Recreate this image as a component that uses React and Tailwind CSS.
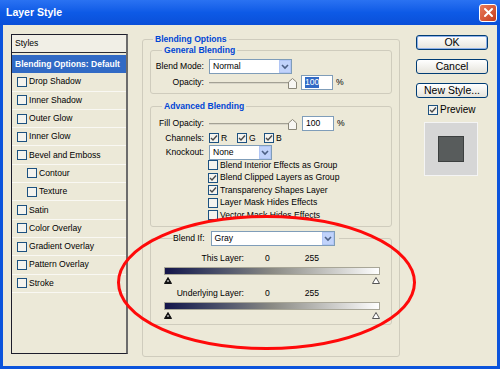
import React from 'react'

const styleRows = [
  { label: 'Drop Shadow' },
  { label: 'Inner Shadow' },
  { label: 'Outer Glow' },
  { label: 'Inner Glow' },
  { label: 'Bevel and Emboss' },
  { label: 'Contour', indent: true },
  { label: 'Texture', indent: true },
  { label: 'Satin' },
  { label: 'Color Overlay' },
  { label: 'Gradient Overlay' },
  { label: 'Pattern Overlay' },
  { label: 'Stroke' },
]

function Check({ checked }) {
  return (
    <span className="w-[10px] h-[10px] shrink-0 border border-[#1c5180] bg-[#f4f3ee] flex items-center justify-center">
      {checked && (
        <svg width="8" height="8" viewBox="0 0 8 8">
          <path d="M1 4 L3 6 L7 1.5" fill="none" stroke="#4a4a4a" strokeWidth="1.4" />
        </svg>
      )}
    </span>
  )
}

function Select({ value, width }) {
  return (
    <div className={`h-[15px] ${width} bg-white border border-[#7f9db9] flex items-center`}>
      <span className="flex-1 pl-[3px]">{value}</span>
      <span className="w-[12px] h-[13px] bg-[#c1d3fb] border border-[#b1c6f5] flex items-center justify-center">
        <svg width="8" height="6" viewBox="0 0 8 6">
          <path d="M1 1 L4 4 L7 1" fill="none" stroke="#4d6185" strokeWidth="1.6" />
        </svg>
      </span>
    </div>
  )
}

function Slider() {
  return (
    <div className="relative w-[86px] h-[12px] flex items-center">
      <div className="w-full h-[2px] border-t border-[#a3a194] bg-[#d8d5c8]" />
      <svg className="absolute right-[-2px] top-[1px]" width="9" height="11" viewBox="0 0 9 11">
        <path d="M0.5 10.5 L0.5 4 L4.5 0.5 L8.5 4 L8.5 10.5 Z" fill="#f7f6f2" stroke="#8a8778" />
      </svg>
    </div>
  )
}

function NumBox({ selected }) {
  return (
    <div className="w-[32px] h-[15px] bg-white border border-[#7f9db9] flex items-center pl-[3px]">
      <span className={selected ? 'bg-[#316ac5] text-white' : ''}>100</span>
    </div>
  )
}

function Legend({ children, className = 'ml-[7px]' }) {
  return (
    <legend className={`${className} px-[2px] font-bold text-[#0046d5] leading-[11px]`}>
      {children}
    </legend>
  )
}

function Row({ label, children, className = '' }) {
  return (
    <div className={`flex items-center ${className}`}>
      <span className="w-[49px] text-right whitespace-nowrap">{label}</span>
      <div className="ml-[5px] flex items-center">{children}</div>
    </div>
  )
}

function GradientBar() {
  return (
    <div>
      <div className="h-[8px] border border-[#a8a697] bg-gradient-to-r from-[#15154a] via-[#8a8a84] to-white" />
      <div className="flex justify-between mt-[2px]">
        <svg width="8" height="7" viewBox="0 0 8 7">
          <path d="M4 0.5 L7.5 6.5 L0.5 6.5 Z" fill="#111" stroke="#111" />
          <rect x="3.5" y="3" width="1" height="2" fill="#fff" />
        </svg>
        <svg width="8" height="7" viewBox="0 0 8 7">
          <path d="M4 0.5 L7.5 6.5 L0.5 6.5 Z" fill="#fff" stroke="#555" />
        </svg>
      </div>
    </div>
  )
}

function XpButton({ children, isDefault }) {
  return (
    <button
      className={`w-[72px] h-[15px] rounded-[3px] border border-[#003c74] bg-gradient-to-b from-white to-[#e6e4dc] text-[10.5px] leading-none ${
        isDefault ? 'shadow-[inset_0_0_0_1px_#8fb1ea]' : ''
      }`}
    >
      {children}
    </button>
  )
}

export default function App() {
  return (
    <div className="relative w-[500px] h-[369px] overflow-hidden bg-[#0b54dc] font-['Liberation_Sans',Arial,sans-serif] text-[8.6px] text-black leading-[11px]">
      {/* title bar */}
      <div className="h-[25px] flex items-center justify-between pl-[6px] pr-[3px] bg-gradient-to-b from-[#2a72f2] via-[#0d5ae6] to-[#0a4fd8]">
        <span className="text-white font-bold text-[10.5px] leading-none -mt-[1px]">Layer Style</span>
        <span className="w-[18px] h-[18px] rounded-[3px] border border-white bg-gradient-to-br from-[#e97b5a] to-[#c5391a] flex items-center justify-center">
          <svg width="11" height="11" viewBox="0 0 11 11">
            <path d="M2 2 L9 9 M9 2 L2 9" stroke="#fff" strokeWidth="2" strokeLinecap="round" />
          </svg>
        </span>
      </div>

      {/* body */}
      <div className="mx-[3px] h-[341px] bg-[#ece9d8] flex pt-[9px] pl-[8px]">
        {/* styles list */}
        <div className="w-[117px] h-[320px] border border-[#1d1d2b] border-r-[#6c6c6c] border-r-2 bg-[#ece9d8]">
          <div className="h-[18px] flex items-center pl-[3px] border-b border-[#2b2b33] bg-[#f1efe6]">Styles</div>
          <div className="pt-[2px]">
            <div className="h-[18.3px] flex items-center pl-[3px] bg-[#316ac5] text-white font-bold text-[8.5px]">
              Blending Options: Default
            </div>
            {styleRows.map((r) => (
              <div
                key={r.label}
                className={`h-[18.3px] flex items-center gap-[2px] border-b border-[#f9f8f3] ${r.indent ? 'pl-[15px]' : 'pl-[5px]'}`}
              >
                <Check />
                <span>{r.label}</span>
              </div>
            ))}
          </div>
        </div>

        {/* blending options */}
        <fieldset className="ml-[14px] w-[258px] h-[323px] border border-[#cfccbd] rounded-[3px] px-[7px]">
          <Legend className="ml-[3px]">Blending Options</Legend>

          <fieldset className="border border-[#cfccbd] rounded-[3px] h-[49px] pl-[4px]">
            <Legend>General Blending</Legend>
            <Row label="Blend Mode:" className="mt-[3px]">
              <Select value="Normal" width="w-[83px]" />
            </Row>
            <Row label="Opacity:" className="mt-[1px]">
              <Slider />
              <span className="ml-[6px]"><NumBox selected /></span>
              <span className="ml-[3px]">%</span>
            </Row>
          </fieldset>

          <fieldset className="mt-[7px] border border-[#cfccbd] rounded-[3px] h-[126px] pl-[4px]">
            <Legend>Advanced Blending</Legend>
            <Row label="Fill Opacity:" className="mt-[4px]">
              <Slider />
              <span className="ml-[7px]"><NumBox /></span>
              <span className="ml-[3px]">%</span>
            </Row>
            <Row label="Channels:" className="mt-[1px] h-[12px]">
              <Check checked />
              <span className="ml-[2px] w-[16px]">R</span>
              <Check checked />
              <span className="ml-[2px] w-[15px]">G</span>
              <Check checked />
              <span className="ml-[2px]">B</span>
            </Row>
            <Row label="Knockout:" className="mt-[1px]">
              <Select value="None" width="w-[63px]" />
            </Row>
            <div className="ml-[53px] -mt-[1px] flex flex-col">
              {[
                ['Blend Interior Effects as Group', false],
                ['Blend Clipped Layers as Group', true],
                ['Transparency Shapes Layer', true],
                ['Layer Mask Hides Effects', false],
                ['Vector Mask Hides Effects', false],
              ].map(([t, c]) => (
                <div key={t} className="h-[12.5px] flex items-center gap-[2px]">
                  <Check checked={c} />
                  <span>{t}</span>
                </div>
              ))}
            </div>
          </fieldset>

          <fieldset className="mt-[4px] border border-[#cfccbd] rounded-[3px] h-[94px] pl-[13px] pr-[11px]">
            <legend className="ml-[9px] pr-[4px] flex items-center">
              <span>Blend If:</span>
              <span className="ml-[6px]">
                <Select value="Gray" width="w-[124px]" />
              </span>
            </legend>
            <div className="mt-[7px] flex items-center">
              <span className="w-[80px] text-right">This Layer:</span>
              <span className="ml-[21px]">0</span>
              <span className="ml-[35px]">255</span>
            </div>
            <div className="mt-[3px]"><GradientBar /></div>
            <div className="mt-[4px] flex items-center">
              <span className="w-[80px] text-right">Underlying Layer:</span>
              <span className="ml-[21px]">0</span>
              <span className="ml-[35px]">255</span>
            </div>
            <div className="mt-[3px]"><GradientBar /></div>
          </fieldset>
        </fieldset>

        {/* buttons */}
        <div className="ml-[16px] w-[72px] pt-[1px] flex flex-col">
          <XpButton isDefault>OK</XpButton>
          <div className="mt-[9px]"><XpButton>Cancel</XpButton></div>
          <div className="mt-[9px]"><XpButton>New Style...</XpButton></div>
          <div className="mt-[6px] ml-[12px] flex items-center gap-[2px]">
            <Check checked />
            <span className="text-[10px]">Preview</span>
          </div>
          <div className="mt-[7px] ml-[8px] w-[54px] h-[54px] bg-[#d6d6d6] border border-[#f4f4f4] flex items-center justify-center">
            <div className="w-[26px] h-[26px] bg-[#585c5c] border border-[#3c3f3f]" />
          </div>
        </div>
      </div>

      {/* red annotation ellipse */}
      <svg className="absolute left-0 top-0 pointer-events-none" width="500" height="369">
        <ellipse cx="266.5" cy="282.5" rx="148" ry="66" fill="none" stroke="#ff0a0a" strokeWidth="3" />
      </svg>
    </div>
  )
}
